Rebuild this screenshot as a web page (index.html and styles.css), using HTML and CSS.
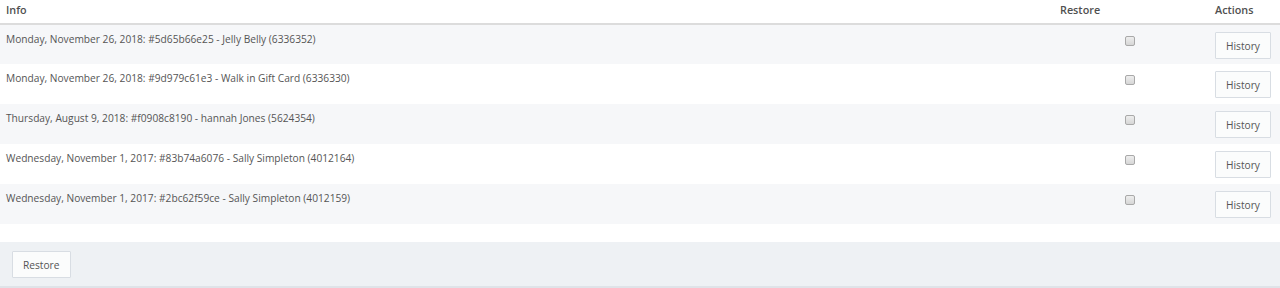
FILE: index.html
```html
<!DOCTYPE html>
<html lang="en">
<head>
  <meta charset="UTF-8" />
  <title>Restore Orders</title>
  <link rel="stylesheet" href="styles.css">
</head>
<body>

<table class="restore-table">
  <thead>
    <tr>
      <th class="col-info">Info</th>
      <th class="col-restore">Restore</th>
      <th class="col-actions">Actions</th>
    </tr>
  </thead>
  <tbody>
    <tr>
      <td>Monday, November 26, 2018: #5d65b66e25 - Jelly Belly (6336352)</td>
      <td class="cell-check"><input type="checkbox" class="check" /></td>
      <td class="cell-actions"><button class="btn">History</button></td>
    </tr>
    <tr>
      <td>Monday, November 26, 2018: #9d979c61e3 - Walk in Gift Card (6336330)</td>
      <td class="cell-check"><input type="checkbox" class="check" /></td>
      <td class="cell-actions"><button class="btn">History</button></td>
    </tr>
    <tr>
      <td>Thursday, August 9, 2018: #f0908c8190 - hannah Jones (5624354)</td>
      <td class="cell-check"><input type="checkbox" class="check" /></td>
      <td class="cell-actions"><button class="btn">History</button></td>
    </tr>
    <tr>
      <td>Wednesday, November 1, 2017: #83b74a6076 - Sally Simpleton (4012164)</td>
      <td class="cell-check"><input type="checkbox" class="check" /></td>
      <td class="cell-actions"><button class="btn">History</button></td>
    </tr>
    <tr>
      <td>Wednesday, November 1, 2017: #2bc62f59ce - Sally Simpleton (4012159)</td>
      <td class="cell-check"><input type="checkbox" class="check" /></td>
      <td class="cell-actions"><button class="btn">History</button></td>
    </tr>
  </tbody>
</table>

<div class="panel-footer">
  <button class="btn">Restore</button>
</div>

</body>
</html>
```

FILE: styles.css
```css
* {
  box-sizing: border-box;
}

html, body {
  margin: 0;
  padding: 0;
  background: #fff;
  font-family: "Open Sans", sans-serif;
  font-size: 10.2px;
  color: #555;
}

.restore-table {
  width: 100%;
  border-collapse: collapse;
  table-layout: fixed;
}

.restore-table th {
  height: 24px;
  padding: 0 6px 5px;
  text-align: left;
  font-size: 10.8px;
  font-weight: 600;
  color: #505050;
  border-bottom: 2px solid #dcdcdc;
}

.col-restore {
  width: 155px;
}

.col-actions {
  width: 71px;
}

.restore-table td {
  height: 40px;
  padding: 7px 6px 0;
  vertical-align: top;
  line-height: 14px;
}

.restore-table tbody tr:nth-child(odd) {
  background: #f6f7f9;
}

.cell-check {
  text-align: center;
}

.check {
  appearance: none;
  -webkit-appearance: none;
  display: inline-block;
  width: 10px;
  height: 10px;
  margin: 4px 4px 0 0;
  border: 1px solid #a9a9a9;
  border-radius: 2px;
  background: linear-gradient(#eee, #d6d6d6);
  vertical-align: top;
}

.cell-actions {
  padding-top: 7px !important;
}

.btn {
  font-family: "Open Sans", sans-serif;
  font-size: 10.2px;
  color: #555;
  height: 27px;
  padding: 0 10px;
  background: #fbfcfc;
  border: 1px solid #d8dde3;
  border-radius: 1px;
}

.panel-footer {
  margin-top: 18px;
  height: 46px;
  padding: 9px 12px 0;
  background: #eef1f4;
  border-bottom: 2px solid #dfe3e8;
}
```
